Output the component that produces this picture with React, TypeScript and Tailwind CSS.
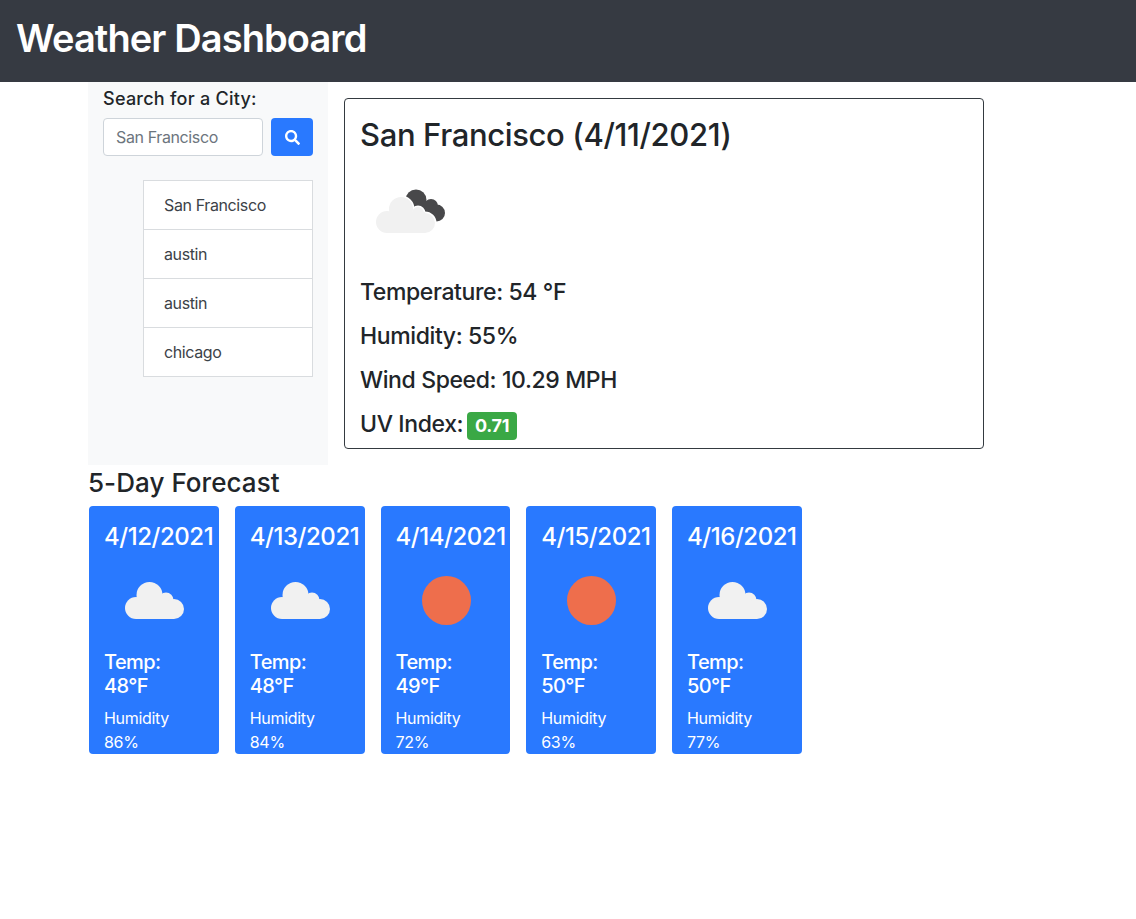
import { FaSearch } from "react-icons/fa";

const forecast = [
  { date: "4/12/2021", icon: "cloud", temp: "48°F", humidity: "86%" },
  { date: "4/13/2021", icon: "cloud", temp: "48°F", humidity: "84%" },
  { date: "4/14/2021", icon: "sun", temp: "49°F", humidity: "72%" },
  { date: "4/15/2021", icon: "sun", temp: "50°F", humidity: "63%" },
  { date: "4/16/2021", icon: "cloud", temp: "50°F", humidity: "77%" },
];

const cities = ["San Francisco", "austin", "austin", "chicago"];

function CloudIcon() {
  return (
    <svg className="block w-[100px] h-[100px]" viewBox="0 0 100 100" fill="#f1f1f1">
      <circle cx="32" cy="57" r="11" />
      <circle cx="45.500" cy="44" r="13" />
      <circle cx="62" cy="49" r="7.500" />
      <circle cx="70" cy="58" r="10" />
      <rect x="32" y="52" width="38" height="16" />
    </svg>
  );
}

function SunIcon() {
  return (
    <svg className="block w-[100px] h-[100px]" viewBox="0 0 100 100">
      <circle cx="50.500" cy="49.500" r="24.500" fill="#ee6e4c" />
    </svg>
  );
}

function BrokenCloudIcon() {
  return (
    <svg className="block w-[100px] h-[100px]" viewBox="0 0 100 100">
      <g fill="#48484a">
        <circle cx="56" cy="40" r="10.500" />
        <circle cx="71" cy="46" r="7" />
        <circle cx="76.500" cy="53" r="8.500" />
        <rect x="52" y="42" width="20" height="18" />
      </g>
      <g fill="#ffffff" stroke="#ffffff" strokeWidth="3">
        <circle cx="27" cy="62" r="11" />
        <circle cx="41" cy="49" r="12" />
        <circle cx="58" cy="53" r="6" />
        <circle cx="65" cy="63" r="10" />
      </g>
      <g fill="#f1f1f1">
        <circle cx="27" cy="62" r="11" />
        <circle cx="41" cy="49" r="12" />
        <circle cx="58" cy="53" r="6" />
        <circle cx="65" cy="63" r="10" />
        <rect x="27" y="52" width="38" height="21" />
      </g>
    </svg>
  );
}

export default function App() {
  return (
    <div className="min-h-[919px] bg-white text-[#212529] font-['Inter',sans-serif]">
      <header className="h-[82px] bg-[#363a42] flex items-center pl-[16px] pb-[6px]">
        <h1 className="text-[38px] leading-[46px] font-semibold text-white tracking-[-0.9px]">
          Weather Dashboard
        </h1>
      </header>

      <div className="ml-[88px]">
        <div className="flex">
          <aside className="w-[240px] h-[383px] bg-[#f8f9fa] px-[15px]">
            <label className="block text-[18px] leading-[22px] font-medium pt-[6px] mb-[8px] tracking-[0.25px]">
              Search for a City:
            </label>
            <div className="flex gap-2">
              <input
                readOnly
                placeholder="San Francisco"
                className="w-[160px] h-[38px] bg-white border border-[#ced4da] rounded px-3 text-base tracking-[-0.38px] text-[#495057] placeholder:text-[#6c757d] outline-none"
              />
              <button className="w-[42px] h-[38px] rounded bg-[#2979ff] flex items-center justify-center text-white">
                <FaSearch size={15} />
              </button>
            </div>
            <ul className="ml-10 mt-6 w-[170px] bg-white border border-[#d9dcdf]">
              {cities.map((city, idx) => (
                <li
                  key={idx}
                  className="h-[49px] px-5 flex items-center text-base tracking-[-0.38px] text-[#3c4248] border-b border-[#d9dcdf] last:border-b-0 last:h-[48px]"
                >
                  {city}
                </li>
              ))}
            </ul>
          </aside>

          <main className="ml-4 mt-4 w-[640px] h-[351px] border border-[#343a40] rounded px-[15px] pt-[17px]">
            <h2 className="text-[31px] leading-[38px] font-medium tracking-[-0.36px] mb-[6px]">
              San Francisco (4/11/2021)
            </h2>
            <BrokenCloudIcon />
            <div className="mt-[18px] text-[23px] leading-[28px] font-[450] tracking-[-0.38px]">
              <p className="mb-4">Temperature: 54 °F</p>
              <p className="mb-4">Humidity: 55%</p>
              <p className="mb-4">Wind Speed: 10.29 MPH</p>
              <p>
                UV Index:{" "}
                <span className="inline-block -ml-[2px] align-baseline bg-[#3aa845] text-white text-[18px] leading-[18px] font-bold rounded px-2 py-[5px] tracking-[-0.3px]">
                  0.71
                </span>
              </p>
            </div>
          </main>
        </div>

        <div className="ml-px">
          <h3 className="-ml-px text-[26px] leading-[34px] font-medium mt-[1px] mb-[6px] tracking-[0.05px]">5-Day Forecast</h3>
          <div className="flex gap-[16px]">
            {forecast.map((day) => (
              <div
                key={day.date}
                className="w-[129.75px] h-[248px] rounded bg-[#2979ff] text-white pl-[15px] pt-4 overflow-hidden"
              >
                <div className="text-[24px] leading-[29px] whitespace-nowrap font-[450] tracking-[-0.45px]">{day.date}</div>
                <div>
                  {day.icon === "cloud" ? <CloudIcon /> : <SunIcon />}
                </div>
                <div className="-mt-px text-[20px] leading-6 font-medium tracking-[-0.6px]">
                  Temp:
                  <br />
                  {day.temp}
                </div>
                <div className="mt-[8px] text-base leading-6 tracking-[-0.3px]">Humidity</div>
                <div className="text-base leading-6 tracking-[-0.3px]">{day.humidity}</div>
              </div>
            ))}
          </div>
        </div>
      </div>
    </div>
  );
}
